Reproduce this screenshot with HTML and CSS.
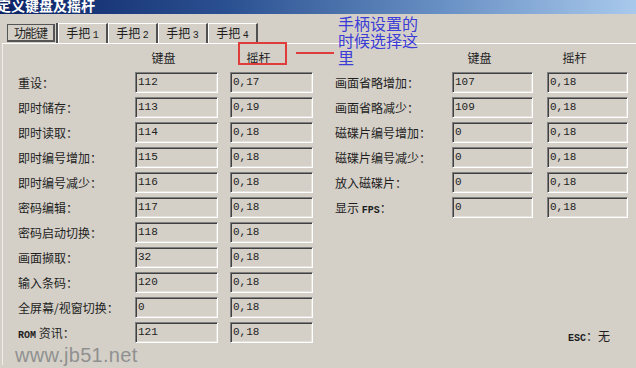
FILE: index.html
```html
<!DOCTYPE html>
<html>
<head>
	<meta charset="utf-8">
	<title>定义键盘及摇杆</title>
	<link rel="stylesheet" href="styles.css">
</head>
<body>
<div class="window">
	<div class="titlebar"><span class="title">定义键盘及摇杆</span></div>

	<div class="tabs">
		<div class="tab active"><span class="focus">功能键</span></div>
		<div class="tab">手把 <span class="num">1</span></div>
		<div class="tab">手把 <span class="num">2</span></div>
		<div class="tab">手把 <span class="num">3</span></div>
		<div class="tab">手把 <span class="num">4</span></div>
	</div>

	<div class="panel">
		<div class="sections">
			<div class="section left">
				<div class="grid">
					<div></div><div class="head">键盘</div><div class="head">摇杆</div>

					<div class="label">重设：</div><div class="field">112</div><div class="field">0,17</div>
					<div class="label">即时储存：</div><div class="field">113</div><div class="field">0,19</div>
					<div class="label">即时读取：</div><div class="field">114</div><div class="field">0,18</div>
					<div class="label">即时编号增加：</div><div class="field">115</div><div class="field">0,18</div>
					<div class="label">即时编号减少：</div><div class="field">116</div><div class="field">0,18</div>
					<div class="label">密码编辑：</div><div class="field">117</div><div class="field">0,18</div>
					<div class="label">密码启动切换：</div><div class="field">118</div><div class="field">0,18</div>
					<div class="label">画面撷取：</div><div class="field">32</div><div class="field">0,18</div>
					<div class="label">输入条码：</div><div class="field">120</div><div class="field">0,18</div>
					<div class="label">全屏幕/视窗切换：</div><div class="field">0</div><div class="field">0,18</div>
					<div class="label"><span class="latin">ROM</span> 资讯：</div><div class="field">121</div><div class="field">0,18</div>
				</div>
			</div>

			<div class="section right">
				<div class="grid">
					<div></div><div class="head">键盘</div><div class="head">摇杆</div>

					<div class="label">画面省略增加：</div><div class="field">107</div><div class="field">0,18</div>
					<div class="label">画面省略减少：</div><div class="field">109</div><div class="field">0,18</div>
					<div class="label">磁碟片编号增加：</div><div class="field">0</div><div class="field">0,18</div>
					<div class="label">磁碟片编号减少：</div><div class="field">0</div><div class="field">0,18</div>
					<div class="label">放入磁碟片：</div><div class="field">0</div><div class="field">0,18</div>
					<div class="label">显示 <span class="latin">FPS</span>：</div><div class="field">0</div><div class="field">0,18</div>
				</div>
				<div class="esc"><span class="latin">ESC</span>：无</div>
			</div>
		</div>

		<div class="watermark">www.jb51.net</div>
	</div>

	<!-- annotation drawn over the dialog -->
	<div class="mark-box"></div>
	<div class="mark-line"></div>
	<div class="note">手柄设置的<br>时候选择这<br>里</div>
</div>
</body>
</html>
```

FILE: styles.css
```css
body {
	margin: 0;
	background-color: #d4d0c8;
	font-family: "Noto Sans CJK SC", sans-serif;
	font-size: 12px;
	color: #1e1e1e;
	overflow: hidden;
}
.window {
	position: relative;
	width: 636px;
	height: 368px;
	overflow: hidden;
}

/* title bar */
.titlebar {
	height: 14px;
	overflow: hidden;
	background: linear-gradient(to right, #0c2466 0%, #2a4f90 35%, #6a91c5 70%, #a9c9ec 100%);
}
.title {
	display: block;
	margin: -3px 0 0 -3px;
	color: #fff;
	font-weight: bold;
	font-size: 14px;
	line-height: 17px;
}

/* tabs */
.tabs {
	display: flex;
	margin-top: 9px;
	padding-left: 7px;
	height: 20px;
}
.tab {
	width: 50px;
	height: 20px;
	box-sizing: border-box;
	border-top: 1px solid #fff;
	border-left: 1px solid #fff;
	border-right: 2px solid #505050;
	text-align: center;
	line-height: 18px;
	white-space: nowrap;
}
.tab.active {
	width: 51px;
	border-left: none;
	border-top: none;
	padding: 1px 1px 0 0;
}
.focus {
	display: block;
	border: 1px solid #555;
	border-right-width: 2px;
	border-bottom-width: 2px;
	line-height: 15px;
	letter-spacing: -1px;
}
.num {
	font-family: "Liberation Mono", monospace;
	font-size: 10px;
}

/* tab page */
.panel {
	border-top: 1px solid #fff;
	border-left: 1px solid #f0eeea;
	margin-left: 2px;
	padding: 4px 0 0 15px;
}
.sections {
	display: flex;
	gap: 22px;
}
.section {
	display: flex;
	flex-direction: column;
}
.grid {
	display: grid;
	row-gap: 4px;
	grid-template-rows: 20px;
	grid-auto-rows: 21px;
}
.left .grid {
	grid-template-columns: 105px 83px 83px;
	column-gap: 12px;
}
.right .grid {
	grid-template-columns: 103px 81px 81px;
	column-gap: 14px;
}
.head {
	text-align: center;
	padding-right: 26px;
	line-height: 20px;
}
.label {
	line-height: 21px;
	white-space: nowrap;
}
.latin {
	font-family: "Liberation Mono", monospace;
	font-size: 10px;
	font-weight: bold;
}
.field {
	box-sizing: border-box;
	height: 21px;
	padding-left: 2px;
	border: 1px solid;
	border-color: #808080 #fff #fff #808080;
	box-shadow: inset 1px 1px 0 #404040, inset -1px -1px 0 #e4e1dc;
	font-family: "Liberation Mono", monospace;
	font-size: 11px;
	line-height: 19px;
	color: #222;
}
.esc {
	margin-top: auto;
	margin-bottom: -4px;
	text-align: right;
	padding-right: 18px;
	line-height: 16px;
}
.watermark {
	margin: 2px 0 0 -3px;
	font-family: "Liberation Sans", sans-serif;
	font-size: 20px;
	line-height: 20px;
	letter-spacing: 0.3px;
	color: #909090;
}

/* red/blue annotation on top */
.mark-box {
	position: absolute;
	left: 238px;
	top: 42px;
	width: 49px;
	height: 23px;
	box-sizing: border-box;
	border: 2px solid #e03c3c;
}
.mark-line {
	position: absolute;
	left: 296px;
	top: 52px;
	width: 38px;
	height: 2px;
	background-color: #e03c3c;
}
.note {
	position: absolute;
	left: 338px;
	top: 15px;
	font-size: 16px;
	line-height: 17px;
	color: #3c3cd6;
}
```
